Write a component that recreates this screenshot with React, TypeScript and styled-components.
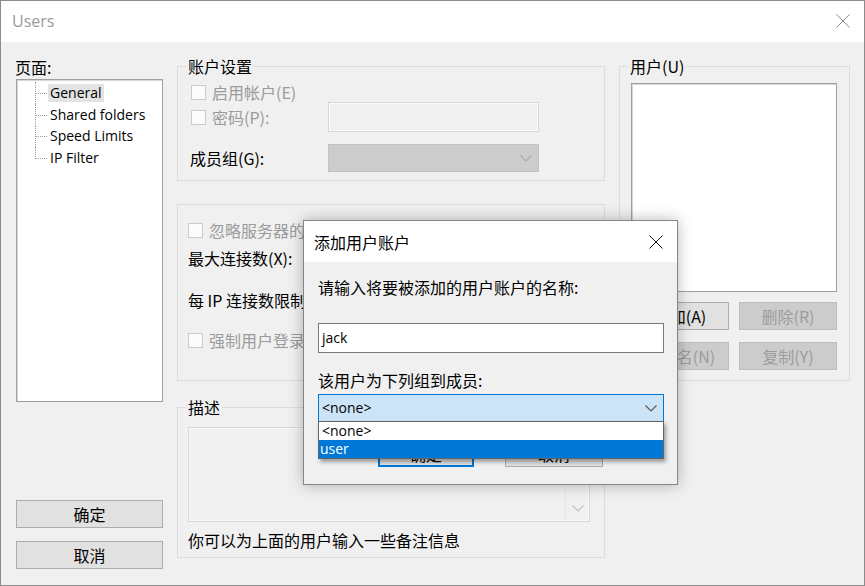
import React from 'react';
import styled, { createGlobalStyle } from 'styled-components';

const Global = createGlobalStyle`
  html, body { margin: 0; padding: 0; background: #f0f0f0; }
  body {
    font-family: "Noto Sans CJK SC", "Noto Sans", sans-serif;
    font-size: 16px;
    color: #000;
  }
  * { box-sizing: border-box; }
`;

const Window = styled.div`
  position: relative;
  width: 865px;
  height: 586px;
  border: 1px solid #8c8c8c;
  background: #f0f0f0;
  display: flex;
  flex-direction: column;
  overflow: hidden;
`;

const TitleBar = styled.div`
  height: 41px;
  flex: none;
  background: #fff;
  display: flex;
  align-items: center;
  justify-content: space-between;
  padding: 0 14px 2px 11px;
`;

const WindowTitle = styled.span`
  font-family: "Open Sans", "Noto Sans CJK SC", sans-serif;
  font-size: 16px;
  line-height: 22px;
  color: #9a9a9a;
`;

const CloseGlyph = styled.svg<{ $color?: string }>`
  width: 14px;
  height: 14px;
  display: block;
  stroke: ${(p) => p.$color || '#000'};
  stroke-width: 1;
  fill: none;
`;

const Body = styled.div`
  flex: 1;
  display: grid;
  grid-template-columns: 147px 428px 231px;
  column-gap: 14px;
  padding: 14px 13px 16px 15px;
`;

const Column = styled.div`
  display: flex;
  flex-direction: column;
  min-height: 0;
`;

const FieldLabel = styled.div<{ $mt?: number; $ml?: number }>`
  line-height: 20px;
  height: 20px;
  margin-top: ${(p) => p.$mt || 0}px;
  margin-left: ${(p) => p.$ml || 0}px;
  white-space: nowrap;
`;

const LatinText = styled.span`
  font-family: "Open Sans", "Noto Sans CJK SC", sans-serif;
  font-size: 14px;
`;

const TreeBox = styled.div`
  margin-top: 2px;
  height: 323px;
  background: #fff;
  border: 1px solid #a0a0a0;
  box-shadow: inset 1px 1px 0 #d6d6d6;
  padding-top: 2px;
`;

const TreeList = styled.ul`
  list-style: none;
  margin: 0;
  padding: 0 0 0 31px;
`;

const TreeItem = styled.li<{ $last?: boolean }>`
  position: relative;
  height: 21.7px;
  display: flex;
  align-items: center;
  &::before {
    content: '';
    position: absolute;
    left: -13px;
    top: 11px;
    width: 12px;
    border-top: 1px dotted #9a9a9a;
  }
  &::after {
    content: '';
    position: absolute;
    left: -13px;
    top: 0;
    height: ${(p) => (p.$last ? '12px' : '22px')};
    border-left: 1px dotted #9a9a9a;
  }
`;

const TreeLabel = styled.span<{ $selected?: boolean }>`
  padding: 0 2px;
  line-height: 18px;
  white-space: nowrap;
  font-family: "Open Sans", "Noto Sans CJK SC", sans-serif;
  font-size: 14px;
  background: ${(p) => (p.$selected ? '#e3e3e3' : 'transparent')};
`;

const ButtonStack = styled.div`
  margin-top: auto;
  display: flex;
  flex-direction: column;
  gap: 13px;
`;

const PushButton = styled.div<{ $disabled?: boolean; $default?: boolean; $w?: number; $h?: number }>`
  height: ${(p) => p.$h || 28}px;
  ${(p) => (p.$w ? `width: ${p.$w}px;` : '')}
  flex: none;
  display: flex;
  align-items: center;
  justify-content: center;
  white-space: nowrap;
  overflow: hidden;
  background: ${(p) => (p.$disabled ? '#cccccc' : '#e1e1e1')};
  border: 1px solid ${(p) => (p.$default ? '#0078d7' : p.$disabled ? '#bfbfbf' : '#adadad')};
  box-shadow: ${(p) => (p.$default ? 'inset 0 0 0 1px #0078d7' : 'none')};
  color: ${(p) => (p.$disabled ? '#9c9c9c' : '#000')};
  line-height: 20px;
`;

const Group = styled.fieldset<{ $mt?: number }>`
  margin: ${(p) => p.$mt || 0}px 0 0 0;
  padding: 0;
  min-width: 0;
  border: 1px solid #dcdcdc;
`;

const Legend = styled.legend`
  margin-left: 8px;
  padding: 0 2px;
  line-height: 20px;
  font-size: 16px;
`;

const GroupContent = styled.div<{ $pad: string }>`
  display: flex;
  flex-direction: column;
  padding: ${(p) => p.$pad};
`;

const FormRow = styled.div<{ $h: number; $mt?: number }>`
  display: flex;
  align-items: center;
  height: ${(p) => p.$h}px;
  margin-top: ${(p) => p.$mt || 0}px;
`;

const RowLead = styled.div<{ $w?: number; $pt?: number }>`
  ${(p) => (p.$w ? `width: ${p.$w}px; flex: none;` : '')}
  display: flex;
  align-items: center;
  align-self: ${(p) => (p.$pt ? 'flex-start' : 'center')};
  padding-top: ${(p) => p.$pt || 0}px;
`;

const CheckBox = styled.span<{ $ml?: number }>`
  width: 15px;
  height: 15px;
  flex: none;
  margin-left: ${(p) => p.$ml || 0}px;
  margin-right: 6px;
  border: 1px solid #cccccc;
  background: #fbfbfb;
`;

const Caption = styled.span<{ $disabled?: boolean }>`
  line-height: 20px;
  white-space: nowrap;
  color: ${(p) => (p.$disabled ? '#9b9b9b' : '#000')};
`;

const DisabledInput = styled.div<{ $w: number; $h: number }>`
  width: ${(p) => p.$w}px;
  height: ${(p) => p.$h}px;
  border: 1px solid #d7d7d7;
  box-shadow: inset 0 0 0 1px #fafafa;
  background: #f0f0f0;
  flex: none;
`;

const DisabledSelect = styled.div<{ $w: number; $h: number }>`
  width: ${(p) => p.$w}px;
  height: ${(p) => p.$h}px;
  border: 1px solid #c2c2c2;
  background: #cccccc;
  flex: none;
  display: flex;
  align-items: center;
  justify-content: flex-end;
  padding-right: 6px;
`;

const Chevron = styled.svg<{ $color: string }>`
  width: 12px;
  height: 7px;
  display: block;
  fill: none;
  stroke: ${(p) => p.$color};
  stroke-width: 1.2;
`;

const MemoBox = styled.div`
  height: 95px;
  width: 402px;
  border: 1px solid #d9d9d9;
  box-shadow: inset 0 0 0 1px #f7f7f7;
  background: #f0f0f0;
  display: flex;
  justify-content: flex-end;
`;

const MemoScroll = styled.div`
  width: 24px;
  border-left: 1px solid #e6e6e6;
  display: flex;
  flex-direction: column;
  justify-content: flex-end;
  align-items: center;
  padding-bottom: 9px;
`;

const NoteText = styled.div`
  margin-top: 8px;
  line-height: 20px;
  white-space: nowrap;
`;

const UserList = styled.div`
  margin-top: 7px;
  height: 209px;
  background: #fff;
  border: 1px solid #a0a0a0;
  box-shadow: inset 1px 1px 0 #d6d6d6;
`;

const UserButtons = styled.div`
  margin-top: 10px;
  display: grid;
  grid-template-columns: 98px 98px;
  grid-auto-rows: 28px;
  column-gap: 10px;
  row-gap: 12px;
`;

/* ---------- Modal dialog ---------- */

const Dialog = styled.div`
  position: absolute;
  left: 302px;
  top: 219px;
  width: 375px;
  height: 265px;
  border: 1px solid #858585;
  background: #f0f0f0;
  box-shadow: 0 0 14px rgba(0, 0, 0, 0.28);
  display: flex;
  flex-direction: column;
  z-index: 5;
`;

const DialogTitleBar = styled.div`
  height: 41px;
  flex: none;
  background: #fff;
  display: flex;
  align-items: center;
  justify-content: space-between;
  padding: 0 14px 0 10px;
`;

const DialogTitle = styled.span`
  font-size: 16px;
  line-height: 20px;
`;

const DialogBody = styled.div`
  position: relative;
  flex: 1;
  display: flex;
  flex-direction: column;
  padding: 15px 13px 0 14px;
`;

const NameInput = styled.div`
  margin-top: 26px;
  height: 30px;
  border: 1px solid #7a7a7a;
  background: #fff;
  display: flex;
  align-items: center;
  padding-left: 3px;
  line-height: 20px;
`;

const ComboBox = styled.div`
  margin-top: 4px;
  height: 28px;
  border: 1px solid #0078d7;
  background: #cce4f7;
  display: flex;
  align-items: center;
  justify-content: space-between;
  padding: 0 6px 0 3px;
  line-height: 20px;
`;

const DialogButtons = styled.div`
  margin-top: 18px;
  display: flex;
  justify-content: flex-end;
  gap: 31px;
  padding-right: 61px;
`;

const DropList = styled.div`
  position: absolute;
  left: 14px;
  top: 159px;
  width: 346px;
  border: 1px solid #646464;
  background: #fff;
  box-shadow: 2px 3px 4px rgba(0, 0, 0, 0.35);
  z-index: 2;
`;

const DropItem = styled.div<{ $active?: boolean }>`
  height: 18px;
  line-height: 18px;
  padding-left: ${(p) => (p.$active ? 1 : 3)}px;
  font-family: "Open Sans", "Noto Sans CJK SC", sans-serif;
  font-size: 14px;
  background: ${(p) => (p.$active ? '#0078d7' : '#fff')};
  color: ${(p) => (p.$active ? '#fff' : '#000')};
`;

const XIcon = ({ color }: { color?: string }) => (
  <CloseGlyph $color={color} viewBox="0 0 14 14">
    <path d="M0.5 0.5 L13.5 13.5 M13.5 0.5 L0.5 13.5" />
  </CloseGlyph>
);

const Down = ({ color }: { color: string }) => (
  <Chevron $color={color} viewBox="0 0 12 7">
    <path d="M0.5 0.5 L6 6 L11.5 0.5" />
  </Chevron>
);

const pages = ['General', 'Shared folders', 'Speed Limits', 'IP Filter'];

export default function App() {
  return (
    <>
      <Global />
      <Window>
        <TitleBar>
          <WindowTitle>Users</WindowTitle>
          <XIcon color="#8a8a8a" />
        </TitleBar>
        <Body>
          <Column>
            <FieldLabel $mt={1} $ml={-1}>页面:</FieldLabel>
            <TreeBox>
              <TreeList>
                {pages.map((p, i) => (
                  <TreeItem key={p} $last={i === pages.length - 1}>
                    <TreeLabel $selected={i === 0}>{p}</TreeLabel>
                  </TreeItem>
                ))}
              </TreeList>
            </TreeBox>
            <ButtonStack>
              <PushButton>确定</PushButton>
              <PushButton>取消</PushButton>
            </ButtonStack>
          </Column>

          <Column>
            <Group>
              <Legend>账户设置</Legend>
              <GroupContent $pad="7px 0 8px 12px">
                <FormRow $h={18}>
                  <CheckBox $ml={1} />
                  <Caption $disabled>启用帐户(E)</Caption>
                </FormRow>
                <FormRow $h={30} $mt={1}>
                  <RowLead $w={138} $pt={5}>
                    <CheckBox $ml={1} />
                    <Caption $disabled>密码(P):</Caption>
                  </RowLead>
                  <DisabledInput $w={211} $h={30} />
                </FormRow>
                <FormRow $h={28} $mt={12}>
                  <RowLead $w={138}>
                    <Caption>成员组(G):</Caption>
                  </RowLead>
                  <DisabledSelect $w={211} $h={28}>
                    <Down color="#a9a9a9" />
                  </DisabledSelect>
                </FormRow>
              </GroupContent>
            </Group>

            <Group $mt={23}>
              <GroupContent $pad="15px 0 30px 10px">
                <FormRow $h={20}>
                  <CheckBox />
                  <Caption $disabled>忽略服务器的速度限制</Caption>
                </FormRow>
                <FormRow $h={20} $mt={8}>
                  <RowLead $w={200}>
                    <Caption>最大连接数(X):</Caption>
                  </RowLead>
                  <DisabledInput $w={80} $h={24} />
                </FormRow>
                <FormRow $h={20} $mt={22}>
                  <RowLead $w={200}>
                    <Caption>每 IP 连接数限制:</Caption>
                  </RowLead>
                  <DisabledInput $w={80} $h={24} />
                </FormRow>
                <FormRow $h={20} $mt={20}>
                  <CheckBox />
                  <Caption $disabled>强制用户登录</Caption>
                </FormRow>
              </GroupContent>
            </Group>

            <Group $mt={16}>
              <Legend>描述</Legend>
              <GroupContent $pad="10px 0 7px 10px">
                <MemoBox>
                  <MemoScroll>
                    <Down color="#c2c2c2" />
                  </MemoScroll>
                </MemoBox>
                <NoteText>你可以为上面的用户输入一些备注信息</NoteText>
              </GroupContent>
            </Group>
          </Column>

          <Column>
            <Group>
              <Legend>用户(U)</Legend>
              <GroupContent $pad="0 12px 10px 11px">
                <UserList />
                <UserButtons>
                  <PushButton>添加(A)</PushButton>
                  <PushButton $disabled>删除(R)</PushButton>
                  <PushButton $disabled>重命名(N)</PushButton>
                  <PushButton $disabled>复制(Y)</PushButton>
                </UserButtons>
              </GroupContent>
            </Group>
          </Column>
        </Body>

        <Dialog>
          <DialogTitleBar>
            <DialogTitle>添加用户账户</DialogTitle>
            <XIcon color="#1a1a1a" />
          </DialogTitleBar>
          <DialogBody>
            <FieldLabel>请输入将要被添加的用户账户的名称:</FieldLabel>
            <NameInput>
              <LatinText>jack</LatinText>
            </NameInput>
            <FieldLabel $mt={17}>该用户为下列组到成员:</FieldLabel>
            <ComboBox>
              <LatinText>&lt;none&gt;</LatinText>
              <Down color="#5a5a5a" />
            </ComboBox>
            <DialogButtons>
              <PushButton $default $w={96} $h={27}>确定</PushButton>
              <PushButton $w={98} $h={27}>取消</PushButton>
            </DialogButtons>
            <DropList>
              <DropItem>&lt;none&gt;</DropItem>
              <DropItem $active>user</DropItem>
            </DropList>
          </DialogBody>
        </Dialog>
      </Window>
    </>
  );
}
